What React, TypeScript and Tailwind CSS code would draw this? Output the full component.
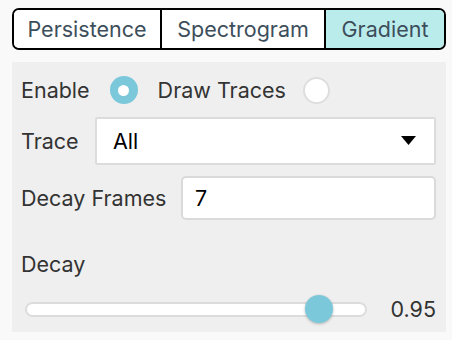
import React from "react";

export default function App() {
  return (
    <div
      className="w-[452px] h-[340px] bg-[#f9f9f9] overflow-hidden"
      style={{ fontFamily: "Inter, 'Noto Sans', sans-serif" }}
    >
      <div className="pt-[8px] pl-[12px]">
        <div className="flex w-[434px] h-[42px] border-2 border-black rounded-[7px] overflow-hidden text-[21.5px] text-[#3d4e5b]">
          <div className="w-[148px] flex items-center justify-center bg-white border-r-2 border-black">
            Persistence
          </div>
          <div className="w-[164px] flex items-center justify-center bg-white border-r-2 border-black">
            Spectrogram
          </div>
          <div className="flex-1 flex items-center justify-center bg-[#bbecec]">
            Gradient
          </div>
        </div>
      </div>
      <div className="mt-[12px] ml-[12px] w-[434px] h-[270px] bg-[#efefef] pl-[9px] pr-[10px] pt-[6px] text-[21.5px] text-[#333]">
        <div className="h-[44px] flex items-center">
          <span>Enable</span>
          <div className="ml-[20px] w-[28px] h-[28px] rounded-full bg-[#7bc8db] flex items-center justify-center">
            <div className="w-[11px] h-[11px] rounded-full bg-white" />
          </div>
          <span className="ml-[20px]">Draw Traces</span>
          <div className="ml-[17px] w-[27px] h-[27px] rounded-full bg-white border-2 border-[#dedede]" />
        </div>
        <div className="mt-[5px] h-[48px] flex items-center">
          <span className="w-[74px]">Trace</span>
          <div className="flex-1 h-[48px] bg-white border-2 border-[#dcdcdc] rounded-[2px] flex items-center pl-[16px] pr-[18px] text-black">
            <span className="flex-1">All</span>
            <svg width="15" height="10" viewBox="0 0 15 10">
              <polygon points="0,0 15,0 7.5,9" fill="#000" />
            </svg>
          </div>
        </div>
        <div className="mt-[11px] h-[44px] flex items-center">
          <span className="w-[160px]">Decay Frames</span>
          <div className="flex-1 h-[44px] bg-white border-2 border-[#dadada] rounded-[5px] flex items-center pl-[12px] text-black">
            7
          </div>
        </div>
        <div className="mt-[28px] h-[32px] flex items-center">Decay</div>
        <div className="mt-[15px] h-[28px] flex items-center">
          <div className="ml-[4px] relative w-[342px] h-[15px] bg-white border-2 border-[#dcdcdc] rounded-full">
            <div className="absolute left-[278px] top-[-8.5px] w-[28px] h-[28px] rounded-full bg-[#7bc8db] shadow-[0_1px_3px_rgba(0,0,0,0.25)]" />
          </div>
          <span className="ml-auto">0.95</span>
        </div>
      </div>
    </div>
  );
}
